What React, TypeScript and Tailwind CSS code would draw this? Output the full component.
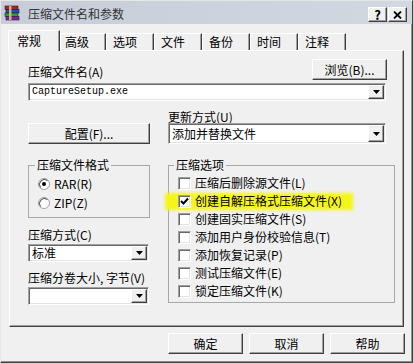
import type { ReactNode } from 'react';

const raised =
  'bg-[#f0f0f0] border border-t-white border-l-white border-r-[#404040] border-b-[#404040] shadow-[inset_-1px_-1px_0_#a0a0a0]';
const sunken =
  'bg-white border border-t-[#a0a0a0] border-l-[#a0a0a0] border-r-white border-b-white shadow-[inset_1px_1px_0_#696969,inset_-1px_-1px_0_#e3e3e3]';

function Arrow() {
  return (
    <svg width="7" height="4" viewBox="0 0 7 4">
      <path d="M0 0h7L3.5 4z" fill="#000" />
    </svg>
  );
}

function Combo({ className, children }: { className: string; children?: ReactNode }) {
  return (
    <div className={`flex p-[1px] ${sunken} ${className}`}>
      <div className="flex min-w-0 flex-1 items-center pl-[2px] leading-[12px] whitespace-nowrap">{children}</div>
      <div className={`flex w-[16px] items-center justify-center ${raised}`}>
        <Arrow />
      </div>
    </div>
  );
}

function Radio({ checked, label }: { checked?: boolean; label: string }) {
  return (
    <div className="flex h-[19px] items-center gap-[4px] pl-[9px]">
      <svg width="12" height="12" viewBox="0 0 12 12">
        <circle cx="6" cy="6" r="5.5" fill="#fff" stroke="#a0a0a0" />
        <path d="M2.5 9.5A5 5 0 0 1 9.5 2.5" stroke="#505050" fill="none" />
        {checked && <circle cx="6" cy="6" r="2" fill="#000" />}
      </svg>
      <span>{label}</span>
    </div>
  );
}

function Check({ checked, label, marked }: { checked?: boolean; label: string; marked?: boolean }) {
  return (
    <div className="relative flex h-[18px] items-center gap-[4px] pl-[9px]">
      {/* yellow marker over the row */}
      {marked && <div className="absolute left-[-4px] top-[1px] h-[17px] w-[188px] bg-[#f5f51a] blur-[1.5px]" />}
      <div className={`relative flex h-[13px] w-[13px] items-center justify-center ${sunken}`}>
        {checked && (
          <svg width="9" height="9" viewBox="0 0 9 9">
            <path d="M1 4l2.5 2.5L8 1.5" stroke="#000" strokeWidth="2" fill="none" />
          </svg>
        )}
      </div>
      <span className="relative">{label}</span>
    </div>
  );
}

function Books() {
  return (
    <svg width="16" height="16" viewBox="0 0 16 16">
      <rect x="1" y="1" width="13" height="3.5" fill="#b0202a" stroke="#3a1010" strokeWidth="0.6" />
      <rect x="2" y="4.5" width="13" height="3.5" fill="#2a4cc0" stroke="#101a40" strokeWidth="0.6" />
      <rect x="1" y="8" width="13" height="3.5" fill="#2f9a3a" stroke="#103010" strokeWidth="0.6" />
      <rect x="2" y="11.5" width="13" height="3.5" fill="#7a2a98" stroke="#301040" strokeWidth="0.6" />
      <rect x="5" y="1" width="2.5" height="14" fill="#d8c27a" opacity="0.9" />
    </svg>
  );
}

const tabs = [
  { t: '高级', w: 'w-[46px] pl-[4px]' },
  { t: '选项', w: 'w-[48px] pl-[6px]' },
  { t: '文件', w: 'w-[48px] pl-[6px]' },
  { t: '备份', w: 'w-[48px] pl-[6px]' },
  { t: '时间', w: 'w-[48px] pl-[6px]' },
  { t: '注释', w: 'w-[48px] pl-[6px]' },
];

export default function App() {
  return (
    <div className="flex h-[363px] w-[413px] flex-col border border-t-[#e6e6e6] border-l-[#e6e6e6] border-r-[#404040] border-b-[#404040] bg-[#f0f0f0] text-[12px] leading-[14px] text-black shadow-[inset_-1px_-1px_0_#909090] font-['Noto_Sans_CJK_SC',sans-serif]">
      {/* Title bar */}
      <div className="flex h-[23px] items-center bg-[linear-gradient(to_right,#c6cdd8,#d2d8e0)] pl-[3px] pr-[5px]">
        <Books />
        <span className="ml-[8px] mt-[3px] text-[#333]">压缩文件名和参数</span>
        <div className="ml-auto mt-[4px] flex gap-[1px]">
          <div className={`flex h-[15px] w-[19px] items-center justify-center text-[13px] font-bold leading-none ${raised}`}>?</div>
          <div className={`flex h-[15px] w-[19px] items-center justify-center ${raised}`}>
            <svg width="9" height="8" viewBox="0 0 9 8">
              <path d="M1 0.5l7 7M8 0.5l-7 7" stroke="#000" strokeWidth="1.8" />
            </svg>
          </div>
        </div>
      </div>

      {/* Tabs */}
      <div className="relative z-10 -mb-[1px] mt-[6px] flex items-end pl-[7px]">
        <div className="flex h-[21px] w-[52px] items-center border-l border-t border-r border-l-white border-t-white border-r-[#404040] bg-[#f0f0f0] pl-[8px] shadow-[inset_-1px_0_0_#a0a0a0]">
          常规
        </div>
        {tabs.map((tab) => (
          <div
            key={tab.t}
            className={`mb-[1px] flex h-[17px] items-center border-l border-t border-r border-l-white border-t-white border-r-[#404040] shadow-[inset_-1px_0_0_#a0a0a0] ${tab.w}`}
          >
            {tab.t}
          </div>
        ))}
      </div>

      {/* Tab panel */}
      <div className="ml-[8px] h-[277px] w-[395px] border border-t-white border-l-white border-r-[#404040] border-b-[#404040] pl-[18px] pt-[8px] shadow-[inset_-1px_-1px_0_#a0a0a0]">
        <div className="flex w-[359px] items-end justify-between">
          <span className="mb-[1px]">压缩文件名(A)</span>
          <div className={`flex h-[21px] w-[75px] items-center justify-center ${raised}`}>浏览(B)...</div>
        </div>
        <Combo className="mt-[3px] h-[18px] w-[358px]">
          <span className="font-['Liberation_Mono',monospace] text-[10px]">CaptureSetup.exe</span>
        </Combo>

        <div className="flex">
          {/* left column */}
          <div className="flex w-[122px] flex-col">
            <div className={`mt-[22px] flex h-[21px] w-[122px] items-center justify-center ${raised}`}>配置(F)...</div>
            <fieldset className="mt-[14px] border border-[#a8a8a8] pb-[5px]">
              <legend className="ml-[6px] px-[2px] leading-[14px]">压缩文件格式</legend>
              <div className="pt-[2px]">
                <Radio checked label="RAR(R)" />
                <Radio label="ZIP(Z)" />
              </div>
            </fieldset>
            <span className="mt-[10px]">压缩方式(C)</span>
            <Combo className="mt-[2px] h-[18px] w-[121px]">标准</Combo>
            <span className="mt-[9px] whitespace-nowrap">压缩分卷大小, 字节(V)</span>
            <Combo className="mt-[2px] h-[18px] w-[121px]" />
          </div>

          {/* right column */}
          <div className="ml-[18px] flex w-[227px] flex-col">
            <span className="mt-[10px] leading-[12px]">更新方式(U)</span>
            <Combo className="h-[21px] w-[218px]">添加并替换文件</Combo>
            <fieldset className="mt-[14px] border border-[#a8a8a8] pb-[2px]">
              <legend className="ml-[5px] px-[2px] leading-[14px]">压缩选项</legend>
              <div className="pt-[2px]">
                <Check label="压缩后删除源文件(L)" />
                <Check checked marked label="创建自解压格式压缩文件(X)" />
                <Check label="创建固实压缩文件(S)" />
                <Check label="添加用户身份校验信息(T)" />
                <Check label="添加恢复记录(P)" />
                <Check label="测试压缩文件(E)" />
                <Check label="锁定压缩文件(K)" />
              </div>
            </fieldset>
          </div>
        </div>
      </div>

      {/* Dialog buttons */}
      <div className="mt-[6px] flex justify-end gap-[6px] pr-[7px]">
        <div className={`flex h-[21px] w-[75px] items-center justify-center ${raised}`}>确定</div>
        <div className={`flex h-[21px] w-[75px] items-center justify-center ${raised}`}>取消</div>
        <div className={`flex h-[21px] w-[75px] items-center justify-center ${raised}`}>帮助</div>
      </div>
    </div>
  );
}
